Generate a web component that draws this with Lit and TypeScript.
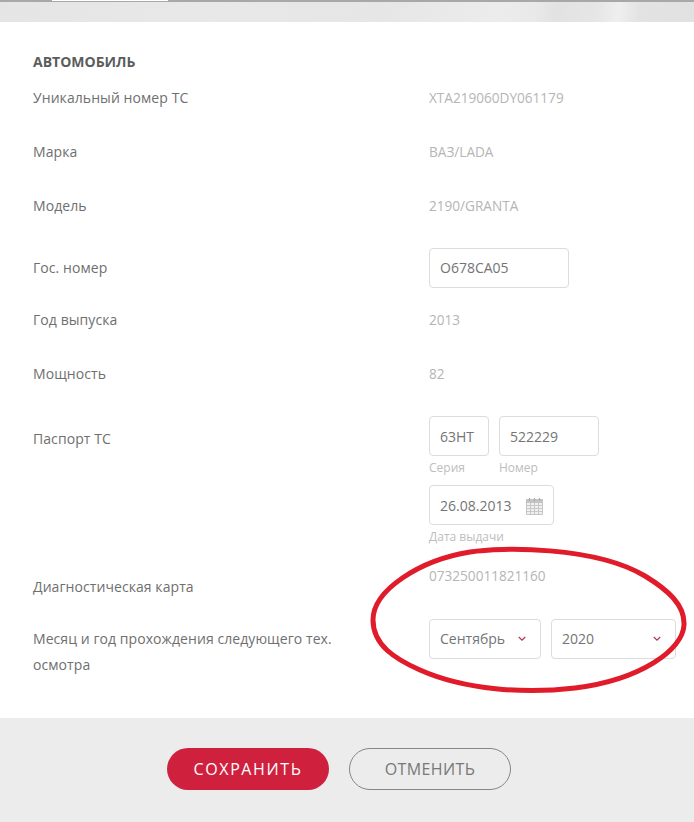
import { LitElement, html, css } from "lit";
import { customElement } from "lit/decorators.js";

const chevron = html`<svg class="chev" width="8" height="6" viewBox="0 0 8 6"><path d="M.8 1l3.2 3.2L7.2 1" fill="none" stroke="#b23a50" stroke-width="1.3"/></svg>`;

@customElement("app-root")
export class AppRoot extends LitElement {
  static styles = css`
    :host { display: block; position: relative; width: 694px; height: 822px; overflow: hidden; background: #fff;
      font-family: "Open Sans", sans-serif; font-size: 14px; line-height: 20px; color: #6f6f6f; }
    * { box-sizing: border-box; }
    .hero { height: 22px; position: relative;
      background: linear-gradient(96deg, #e5e5e5 0%, #e8e8e8 30%, #e6e6e6 55%, #ececec 72%, #e9e9e9 77%, #e2e2e2 80%, #e6e6e6 86%, #efefef 89%, #e3e3e3 92%, #e1e1e1 100%); }
    .strip { height: 2px; background: #a8a8a8; }
    .pill { position: absolute; left: 52px; top: 0; width: 116px; height: 1px; background: #fff; }
    .form { padding: 30px 0 0 33px; height: 696px; }
    h2 { margin: 0 0 16px; font-size: 14px; font-weight: 700; line-height: 20px; color: #5c5c5c; }
    .row { display: grid; grid-template-columns: 396px 1fr; height: 54px; }
    .val { color: #b5b5b5; font-size: 13.6px; }
    .lab { padding-right: 60px; letter-spacing: 0.07px; }
    .plate { height: 62px; margin-top: -2px; }
    .plate .lab { padding-top: 10px; }
    .passport { height: 150px; margin-top: -2px; }
    .passport .lab { padding-top: 13px; }
    .passport .box { padding-top: 1px; }
    .diag { height: 53px; }
    .diag .lab { padding-top: 11px; }
    .month { height: 99px; }
    .month .lab { padding-top: 7px; line-height: 26px; }
    .line { display: flex; gap: 10px; }
    .field { display: flex; flex-direction: column; }
    .box { height: 40px; border: 1px solid #dcdcdc; border-radius: 4px; padding: 0 10px; display: flex; align-items: center;
      justify-content: space-between; color: #747474; font-size: 14px; background: #fff; }
    .w60 { width: 60px; }
    .w100 { width: 100px; }
    .w112 { width: 112px; padding-right: 14px; }
    .w125 { width: 125px; }
    .w140 { width: 140px; }
    .pad14 { padding-right: 14px; }
    .hint { font-size: 12px; line-height: 16px; color: #bdbdbd; margin: 4px 0 0; }
    .date { margin-top: 9px; }
    .chev { flex: none; }
    .cal { flex: none; }
    .footer { height: 104px; background: #ececec; display: flex; justify-content: center; gap: 20px; padding: 30px 16px 0 0; }
    .btn { width: 162px; height: 42px; border-radius: 21px; display: flex; align-items: center; justify-content: center;
      font-size: 16px; font-weight: 400; }
    .save { background: #cf213e; color: #fff; letter-spacing: 1.6px; }
    .cancel { border: 1px solid #868686; color: #787878; letter-spacing: 0.4px; }
    .ring { position: absolute; left: 0; top: 0; pointer-events: none; }
  `;

  render() {
    return html`
      <div class="hero"><div class="strip"></div><div class="pill"></div></div>
      <div class="form">
        <h2>АВТОМОБИЛЬ</h2>
        <div class="row"><div class="lab">Уникальный номер ТС</div><div class="val">XTA219060DY061179</div></div>
        <div class="row"><div class="lab">Марка</div><div class="val">ВАЗ/LADA</div></div>
        <div class="row"><div class="lab">Модель</div><div class="val">2190/GRANTA</div></div>
        <div class="row plate"><div class="lab">Гос. номер</div><div><div class="box w140">О678СА05</div></div></div>
        <div class="row"><div class="lab">Год выпуска</div><div class="val">2013</div></div>
        <div class="row"><div class="lab">Мощность</div><div class="val">82</div></div>
        <div class="row passport"><div class="lab">Паспорт ТС</div>
          <div>
            <div class="line">
              <div class="field"><div class="box w60">63НТ</div><div class="hint">Серия</div></div>
              <div class="field"><div class="box w100">522229</div><div class="hint">Номер</div></div>
            </div>
            <div class="field date"><div class="box w125">26.08.2013
              <svg class="cal" width="17" height="18" viewBox="0 0 17 18"><path d="M.5 2.5h16v15H.5z" fill="#f0f0f0" stroke="#c4c4c4"/><path d="M.5 2.5h16v3H.5z" fill="#c4c4c4" stroke="#c4c4c4"/><path d="M3.5 1v3M8.5 1v3M13.5 1v3" stroke="#ababab" stroke-width="1.2"/><path d="M.5 8.5h16M.5 11.5h16M.5 14.5h16M4.5 6v11M8.5 6v11M12.5 6v11" stroke="#c8c8c8" stroke-width="1" fill="none"/></svg>
            </div><div class="hint">Дата выдачи</div></div>
          </div>
        </div>
        <div class="row diag"><div class="lab">Диагностическая карта</div><div class="val">073250011821160</div></div>
        <div class="row month"><div class="lab">Месяц и год прохождения следующего тех. осмотра</div>
          <div class="line">
            <div class="box w112">Сентябрь ${chevron}</div>
            <div class="box w125 pad14">2020 ${chevron}</div>
          </div>
        </div>
      </div>
      <div class="footer"><div class="btn save">СОХРАНИТЬ</div><div class="btn cancel">ОТМЕНИТЬ</div></div>
      <svg class="ring" width="694" height="822" viewBox="0 0 694 822"><path d="M373 620C373 590 420 560 470 552C500 547 595 546 645 576C668 590 685 605 684 625C683 650 640 680 575 688C525 694 465 690 420 670C395 659 373 645 373 620Z" fill="none" stroke="#e01b2a" stroke-width="5"/></svg>
    `;
  }
}
